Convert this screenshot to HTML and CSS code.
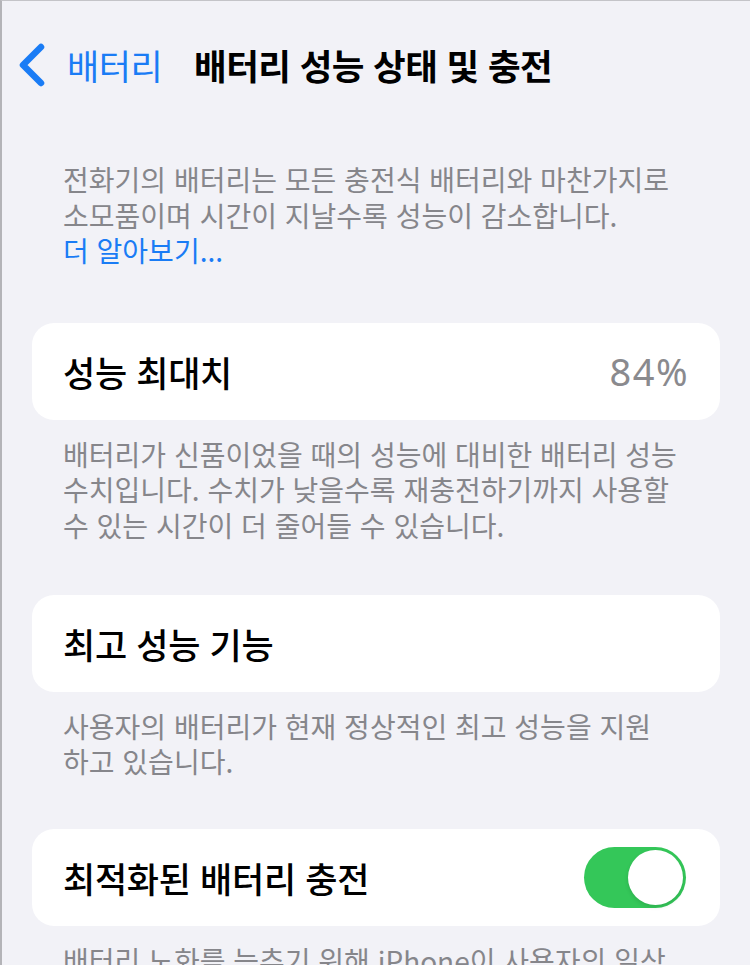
FILE: index.html
```html
<!DOCTYPE html>
<html lang="ko">
<head>
<meta charset="utf-8">
<title>배터리 성능 상태 및 충전</title>
<link rel="stylesheet" href="styles.css">
</head>
<body>
<div class="screen">
  <header class="nav">
    <a class="back" href="#">
      <svg class="chevron" width="28" height="44" viewBox="0 0 28 44" aria-hidden="true">
        <path d="M22 4 L4 22 L22 40" fill="none" stroke="#1a7cf5" stroke-width="6.5" stroke-linecap="round" stroke-linejoin="round"/>
      </svg>
      <span class="back-label">배터리</span>
    </a>
    <h1 class="title">배터리 성능 상태 및 충전</h1>
  </header>

  <p class="intro">전화기의 배터리는 모든 충전식 배터리와 마찬가지로<br>소모품이며 시간이 지날수록 성능이 감소합니다.<br><a class="link" href="#">더 알아보기...</a></p>

  <section class="group">
    <div class="card">
      <span class="label">성능 최대치</span>
      <span class="value">84%</span>
    </div>
    <p class="footer">배터리가 신품이었을 때의 성능에 대비한 배터리 성능<br>수치입니다. 수치가 낮을수록 재충전하기까지 사용할<br>수 있는 시간이 더 줄어들 수 있습니다.</p>
  </section>

  <section class="group">
    <div class="card">
      <span class="label">최고 성능 기능</span>
    </div>
    <p class="footer">사용자의 배터리가 현재 정상적인 최고 성능을 지원<br>하고 있습니다.</p>
  </section>

  <section class="group last">
    <div class="card">
      <span class="label">최적화된 배터리 충전</span>
      <span class="switch on"><span class="knob"></span></span>
    </div>
    <p class="footer">배터리 노화를 늦추기 위해 iPhone이 사용자의 일상</p>
  </section>
</div>
</body>
</html>
```

FILE: styles.css
```css
* { box-sizing: border-box; }

html, body {
  margin: 0;
  padding: 0;
  background: #f2f2f7;
}

body {
  font-family: "Noto Sans CJK KR", "Noto Sans", sans-serif;
  color: #000;
}

.screen {
  width: 750px;
  height: 965px;
  overflow: hidden;
  border-left: 2px solid #b4b4b8;
  border-top: 1px solid #c4c4c8;
}

/* navigation bar */
.nav {
  height: 127px;
  display: flex;
  align-items: center;
  padding-left: 17px;
}

.back {
  display: flex;
  align-items: center;
  text-decoration: none;
  color: #1a7cf5;
}

.chevron {
  display: block;
  margin-right: 20px;
}

.back-label {
  font-size: 35px;
  letter-spacing: -0.5px;
  font-weight: 400;
}

.title {
  margin: 0 0 0 32px;
  font-size: 35.5px;
  font-weight: 700;
  letter-spacing: -0.6px;
}

/* intro paragraph */
.intro {
  margin: 34px 0 0;
  padding-left: 61px;
  font-size: 28px;
  line-height: 35.5px;
  color: #86868b;
}

.link {
  color: #1a7cf5;
  text-decoration: none;
}

/* grouped rows */
.group {
  margin-top: 54px;
}

.group + .group {
  margin-top: 51.5px;
}

.group.last {
  margin-top: 49px;
}

.card {
  margin: 0 30px;
  height: 97px;
  background: #fff;
  border-radius: 22px;
  display: flex;
  align-items: center;
  justify-content: space-between;
  padding: 0 34px 0 31px;
}

.label {
  font-size: 35px;
  font-weight: 500;
  letter-spacing: -0.3px;
}

.value {
  font-family: "Noto Sans", sans-serif;
  font-size: 38px;
  letter-spacing: 1.5px;
  margin-right: -3px;
  color: #8a8a8e;
}

.footer {
  margin: 17px 0 0;
  padding-left: 61px;
  font-size: 28px;
  line-height: 35.5px;
  color: #86868b;
}

/* toggle switch */
.switch {
  width: 102px;
  height: 61px;
  border-radius: 31px;
  background: #34c759;
  display: flex;
  align-items: center;
  justify-content: flex-end;
  padding: 3px;
}

.knob {
  width: 55px;
  height: 55px;
  border-radius: 50%;
  background: #fff;
  box-shadow: 0 2px 4px rgba(0, 0, 0, 0.12);
}
```
